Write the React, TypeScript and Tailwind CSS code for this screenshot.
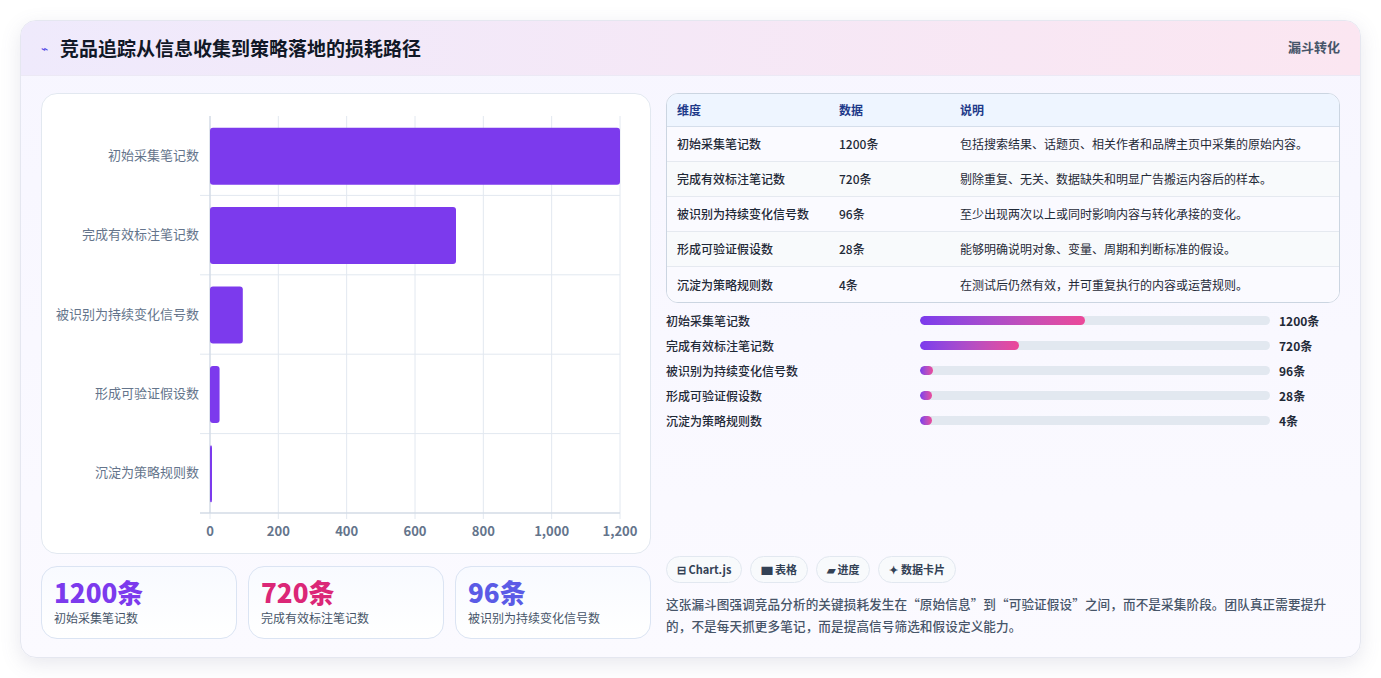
const font = { fontFamily: '"Noto Sans CJK SC", "Noto Sans", sans-serif' };

const rows = [
  { name: '初始采集笔记数', v: 1200, note: '包括搜索结果、话题页、相关作者和品牌主页中采集的原始内容。' },
  { name: '完成有效标注笔记数', v: 720, note: '剔除重复、无关、数据缺失和明显广告搬运内容后的样本。' },
  { name: '被识别为持续变化信号数', v: 96, note: '至少出现两次以上或同时影响内容与转化承接的变化。' },
  { name: '形成可验证假设数', v: 28, note: '能够明确说明对象、变量、周期和判断标准的假设。' },
  { name: '沉淀为策略规则数', v: 4, note: '在测试后仍然有效，并可重复执行的内容或运营规则。' },
];

function Chart() {
  const x0 = 168, x1 = 578, y0 = 22, h = 397;
  const rh = h / 5;
  const ticks = [0, 200, 400, 600, 800, 1000, 1200];
  return (
    <svg width="610" height="460" className="block">
      {ticks.map(t => {
        const x = x0 + (t / 1200) * (x1 - x0);
        return (
          <g key={t}>
            <line x1={x} x2={x} y1={y0} y2={y0 + h + 6} stroke="#e2e8f0" />
            <text x={x} y={442} textAnchor="middle" fontSize="13" fill="#64748b" fontWeight="600">
              {t.toLocaleString('en-US')}
            </text>
          </g>
        );
      })}
      {rows.map((r, i) => (
        <line key={i} x1={x0 - 10} x2={x1} y1={y0 + rh * (i + 1)} y2={y0 + rh * (i + 1)} stroke="#e2e8f0" />
      ))}
      <line x1={x0 - 10} x2={x1} y1={y0 + h} y2={y0 + h} stroke="#cbd5e1" />
      <line x1={x0} x2={x0} y1={y0} y2={y0 + h} stroke="#cbd5e1" />
      {rows.map((r, i) => {
        const cy = y0 + rh * i + rh / 2;
        const w = Math.max(2, (r.v / 1200) * (x1 - x0));
        return (
          <g key={r.name}>
            <rect x={x0} y={cy - 28} width={w} height={57} rx="3" fill="#7c3aed" />
            <text x={x0 - 11} y={cy + 4} textAnchor="end" fontSize="13" fill="#64748b">{r.name}</text>
          </g>
        );
      })}
    </svg>
  );
}

export default function App() {
  return (
    <div className="w-[1381px] h-[678px] bg-white p-5 pb-0" style={font}>
      <div className="h-[638px] rounded-2xl border border-[#e5e7f0] bg-gradient-to-b from-[#f7f6ff] to-[#fbfaff] shadow-[0_6px_20px_rgba(100,100,140,0.15)] overflow-hidden">
        <div className="h-[55px] flex items-center justify-between px-5 bg-gradient-to-r from-[#efeafc] to-[#fbe6f1] border-b border-[#ece9f5]">
          <div className="flex items-center gap-3">
            <span className="text-[#4f46e5] text-xs">⌁</span>
            <h1 className="text-[19px] font-bold text-[#111827]">竞品追踪从信息收集到策略落地的损耗路径</h1>
          </div>
          <span className="text-[13px] font-bold text-[#475569] self-start mt-4">漏斗转化</span>
        </div>
        <div className="flex gap-[15px] px-5 pt-[17px]">
          <div className="w-[610px] flex flex-col gap-[12px]">
            <div className="h-[461px] rounded-2xl border border-[#e2e8f0] bg-white">
              <Chart />
            </div>
            <div className="grid grid-cols-3 gap-[11px]">
              {[
                ['1200条', '初始采集笔记数', 'text-[#7c3aed]'],
                ['720条', '完成有效标注笔记数', 'text-[#db2777]'],
                ['96条', '被识别为持续变化信号数', 'text-[#5b5be6]'],
              ].map(([v, l, c]) => (
                <div key={l} className="h-[73px] rounded-2xl border border-[#dbe4f3] bg-gradient-to-b from-[#f8faff] to-white px-3 pt-2">
                  <div className={`text-[26px] leading-[34px] font-extrabold ${c}`}>{v}</div>
                  <div className="text-[12px] text-[#475569]">{l}</div>
                </div>
              ))}
            </div>
          </div>
          <div className="flex-1 flex flex-col">
            <div className="rounded-xl border border-[#cbd5e1] bg-white overflow-hidden text-[12px]">
              <div className="flex h-[33px] items-center bg-[#eef5ff] border-b border-[#d5deeb] font-bold text-[#1e3a8a]">
                <div className="w-[172px] pl-[10px]">维度</div>
                <div className="w-[121px]">数据</div>
                <div>说明</div>
              </div>
              {rows.map((r, i) => (
                <div key={r.name} className={`flex h-[35px] items-center text-[#1f2937] ${i < 4 ? 'border-b border-[#e5e9f0]' : ''} ${i % 2 ? 'bg-[#f8fafc]' : 'bg-[#fafaff]'}`}>
                  <div className="w-[172px] pl-[10px] font-medium">{r.name}</div>
                  <div className="w-[121px] font-medium">{r.v}条</div>
                  <div>{r.note}</div>
                </div>
              ))}
            </div>
            <div className="flex flex-col gap-[8px] mt-[9px]">
              {rows.map(r => (
                <div key={r.name} className="flex items-center h-[17px] text-[12px] font-medium text-[#1f2937]">
                  <div className="w-[254px]">{r.name}</div>
                  <div className="w-[350px] h-[9px] rounded-full bg-[#e2e8f0] overflow-hidden">
                    <div className="h-full rounded-full bg-gradient-to-r from-[#7c3aed] to-[#ec4899]" style={{ width: `${Math.max(3.5, (r.v / 1200) * 47)}%` }} />
                  </div>
                  <div className="pl-[9px] font-semibold">{r.v}条</div>
                </div>
              ))}
            </div>
            <div className="flex-1" />
            <div className="flex gap-2 text-[11px] font-semibold text-[#334155]">
              {['⊟ Chart.js', '▆ 表格', '▰ 进度', '✦ 数据卡片'].map(c => (
                <span key={c} className="h-[27px] px-[10px] flex items-center rounded-full border border-[#e2e8f0] bg-[#f8fafc]">{c}</span>
              ))}
            </div>
            <p className="mt-[10px] mb-[2px] text-[12.6px] leading-[22px] font-medium text-[#475569] tracking-[0.1px]">
              这张漏斗图强调竞品分析的关键损耗发生在“原始信息”到“可验证假设”之间，而不是采集阶段。团队真正需要提升的，不是每天抓更多笔记，而是提高信号筛选和假设定义能力。
            </p>
          </div>
        </div>
      </div>
    </div>
  );
}
